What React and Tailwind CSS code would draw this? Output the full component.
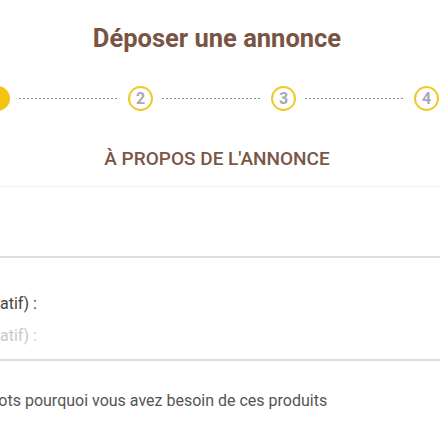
import React from 'react'

const steps = [1, 2, 3, 4]

const Step = ({ n }) => {
  if (n === 1) {
    return (
      <div className="w-[25px] h-[25px] shrink-0 rounded-full bg-[#f2c40f] flex items-center justify-center text-white text-[15px] font-bold">
        1
      </div>
    )
  }
  return (
    <div className="w-[25px] h-[25px] shrink-0 rounded-full border-2 border-[#f0c92a] bg-white flex items-center justify-center text-[#a9a9b1] text-[16px] font-bold">
      {n}
    </div>
  )
}

const Dots = () => (
  <div className="w-[100px] h-px mx-[9px] shrink-0 bg-[repeating-linear-gradient(to_right,#8a8a8a_0_2px,transparent_2px_4px)]" />
)

export default function App() {
  return (
    <div className="w-[440px] h-[440px] overflow-hidden bg-white font-['Roboto',sans-serif]">
      <h1 className="pt-[24px] ml-[-6px] text-center text-[25.5px] leading-[28px] font-bold text-[#7a5443]">
        Déposer une annonce
      </h1>

      <div className="mt-[34px] ml-[-15px] flex items-center">
        {steps.map((n, i) => (
          <React.Fragment key={n}>
            <Step n={n} />
            {i < steps.length - 1 && <Dots />}
          </React.Fragment>
        ))}
      </div>

      <h2 className="mt-[36px] ml-[-6px] text-center text-[19px] leading-[24px] font-medium text-[#7b5646]">
        À PROPOS DE L'ANNONCE
      </h2>

      <div className="mt-[15px] border-t border-[#f3f3f3] h-[70px]" />
      <div className="border-t-2 border-[#dedede]" />

      <div className="mt-[36px] ml-[-164px] w-[201px] text-right whitespace-nowrap text-[16px] leading-[19px] text-[#444]">
        (facultatif) :
      </div>
      <div className="mt-[13px] ml-[-164px] w-[201px] text-right whitespace-nowrap text-[16px] leading-[19px] text-[#c9c9c9]">
        (facultatif) :
      </div>

      <div className="mt-[14px] border-t-2 border-[#dedede]" />

      <div className="mt-[30px] ml-[-178px] w-[497px] text-right whitespace-nowrap text-[16px] leading-[19px] text-[#555]">
        Expliquez en quelques mots pourquoi vous avez besoin de ces produits
      </div>
    </div>
  )
}
